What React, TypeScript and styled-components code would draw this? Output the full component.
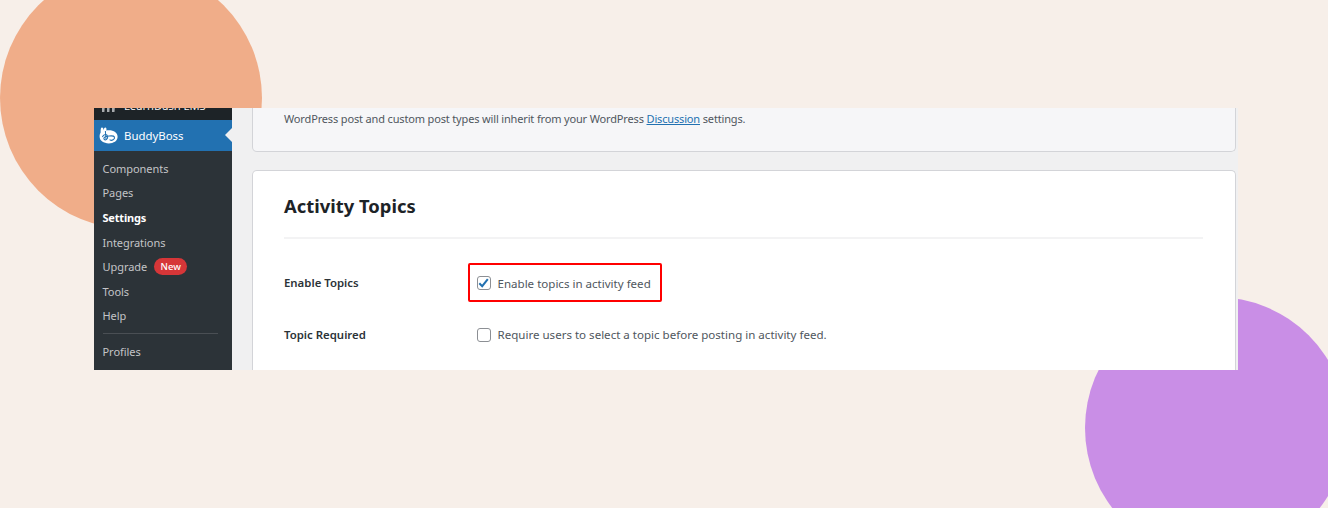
import React from "react";
import styled, { createGlobalStyle } from "styled-components";

const Global = createGlobalStyle`
  html, body { margin: 0; padding: 0; }
  body { background: #f7efe9; font-family: "Noto Sans", "Open Sans", sans-serif; }
`;

const Page = styled.div`
  position: relative;
  width: 1328px;
  height: 508px;
  overflow: hidden;
  background: #f7efe9;
  padding: 108px 90px 0 94px;
  box-sizing: border-box;
`;

const Circle = styled.div<{ $color: string; $x: number; $y: number }>`
  position: absolute;
  left: ${(p) => p.$x - 131}px;
  top: ${(p) => p.$y - 131}px;
  width: 262px;
  height: 262px;
  border-radius: 50%;
  background: ${(p) => p.$color};
`;

const Window = styled.div`
  position: relative;
  display: flex;
  width: 1144px;
  height: 262px;
  overflow: hidden;
  background: #f0f0f1;
`;

const Sidebar = styled.nav`
  width: 138px;
  flex: none;
  background: #2c3338;
  display: flex;
  flex-direction: column;
  overflow: hidden;
`;

const ParentItem = styled.div`
  height: 33px;
  margin-top: -21px;
  flex: none;
  background: #1d2327;
  color: #f0f0f1;
  font-size: 11.2px;
  display: flex;
  align-items: flex-start;
  gap: 7px;
  padding: 11px 0 0 7px;
  box-sizing: border-box;
`;

const ActiveItem = styled.div`
  position: relative;
  height: 31px;
  flex: none;
  background: #2271b1;
  color: #fff;
  font-size: 11.4px;
  display: flex;
  align-items: center;
  gap: 6px;
  padding-left: 5px;
  &::after {
    content: "";
    position: absolute;
    right: 0;
    top: 8px;
    border: 7px solid transparent;
    border-right-color: #f0f0f1;
    border-left-width: 0;
  }
`;

const SubMenu = styled.div`
  display: flex;
  flex-direction: column;
  padding-top: 5px;
`;

const SubItem = styled.div<{ $current?: boolean }>`
  height: 24.6px;
  display: flex;
  align-items: center;
  gap: 7px;
  padding-left: 8.5px;
  font-size: 11px;
  letter-spacing: ${(p) => (p.$current ? "-0.2px" : "-0.05px")};
  font-weight: ${(p) => (p.$current ? 700 : 400)};
  color: ${(p) => (p.$current ? "#ffffff" : "#c3c4c7")};
`;

const Badge = styled.span`
  display: inline-flex;
  align-items: center;
  justify-content: center;
  width: 33px;
  height: 17px;
  border-radius: 9px;
  background: #d63638;
  color: #fff;
  font-size: 9.5px;
  font-weight: 500;
  letter-spacing: 0;
`;

const Separator = styled.div`
  height: 1px;
  margin: 5px 14px 0 9px;
  background: #4a4f54;
`;

const ProfilesItem = styled(SubItem)`
  margin-top: 5px;
`;

const Content = styled.main`
  flex: 1;
  display: flex;
  flex-direction: column;
  gap: 18px;
  padding: 0 2px 0 20px;
  min-width: 0;
`;

const NoticeCard = styled.section`
  height: 44px;
  flex: none;
  box-sizing: border-box;
  background: #f6f6f8;
  border: 1px solid #d3d4d8;
  border-top: none;
  border-radius: 0 0 5px 5px;
  padding: 2px 31px 0;
  font-size: 11px;
  letter-spacing: -0.155px;
  line-height: 17px;
  color: #50575e;
`;

const DocLink = styled.a`
  color: #2271b1;
  text-decoration: underline;
`;

const SettingsCard = styled.section`
  flex: 1;
  background: #fff;
  border: 1px solid #d3d4d8;
  border-bottom: none;
  border-radius: 5px 5px 0 0;
  padding: 0 32px 0 31px;
`;

const Title = styled.h2`
  margin: 0;
  height: 68px;
  box-sizing: border-box;
  padding-top: 20px;
  font-size: 18.4px;
  line-height: 30px;
  font-weight: 700;
  color: #1d2327;
  border-bottom: 2px solid #f3f3f4;
`;

const Field = styled.div<{ $top: number }>`
  display: flex;
  align-items: center;
  margin-top: ${(p) => p.$top}px;
`;

const FieldLabel = styled.div`
  width: 184px;
  flex: none;
  font-size: 11.4px;
  font-weight: 600;
  color: #2c3338;
`;

const Highlight = styled.div<{ $on?: boolean }>`
  display: flex;
  align-items: center;
  gap: 7px;
  width: ${(p) => (p.$on ? "194px" : "auto")};
  height: 39px;
  box-sizing: border-box;
  padding: ${(p) => (p.$on ? "1px" : "0")} 0 0 6.5px;
  border: 2.5px solid ${(p) => (p.$on ? "#ff0000" : "transparent")};
  border-radius: 2px;
  font-size: 11.55px;
  color: #50575e;
`;

const Box = styled.span`
  width: 14px;
  height: 14px;
  flex: none;
  box-sizing: border-box;
  border: 1px solid #8c8f94;
  border-radius: 3px;
  background: #fff;
  display: flex;
  align-items: center;
  justify-content: center;
`;

const BBLogo = () => (
  <svg width="19" height="17" viewBox="0 0 19 17" aria-hidden="true">
    <path d="M1.6 5.4 C1.6 2.4 1.8 .6 3 .6 C4.2 .6 4.4 2 4.6 3.2 C5 1.6 5.4 .4 6.6 .6 C7.6 .8 7.6 2.4 7.4 3.6 C8 3.3 9 3.2 10 3.2 C14.8 3.2 18.6 5.6 18.6 9.8 C18.6 14 14.6 16.4 9.8 16.4 C4.6 16.4 .6 14 .6 9.6 C.6 7.8 1 6.6 1.6 5.4 Z" fill="#fff" />
    <path d="M3.6 9.6 C5 6.8 8 6.8 8.6 9.4 C9.2 12 6.4 13.8 5.2 12.4 C4.2 11.2 5.6 9.4 8.4 9.2 C11 9 14.6 8 15.4 10 C16.2 12.4 12.6 14.2 11 12.8" fill="none" stroke="#2271b1" strokeWidth="1.1" strokeLinecap="round" />
    <path d="M6.4 4.4 L7 12" fill="none" stroke="#2271b1" strokeWidth="1" strokeLinecap="round" />
  </svg>
);

const LDLogo = () => (
  <svg width="16" height="14" viewBox="0 0 16 14" aria-hidden="true">
    <path d="M1 5h3l-.6 9H1zM6 2h3l-.6 12H6zM11 0h3.5l-1 14H11z" fill="#a7aaad" />
  </svg>
);

const Check = () => (
  <svg width="11" height="10" viewBox="0 0 11 10" aria-hidden="true">
    <path d="M1.3 5.2 L4.2 8.2 L9.8 1.2" fill="none" stroke="#2271b1" strokeWidth="2" />
  </svg>
);

export default function App() {
  return (
    <Page>
      <Global />
      <Circle $color="#f0ad89" $x={131} $y={98} />
      <Circle $color="#c98ee6" $x={1216} $y={428} />
      <Window>
        <Sidebar>
          <ParentItem>
            <LDLogo />
            <span>LearnDash LMS</span>
          </ParentItem>
          <ActiveItem>
            <BBLogo />
            <span>BuddyBoss</span>
          </ActiveItem>
          <SubMenu>
            <SubItem>Components</SubItem>
            <SubItem>Pages</SubItem>
            <SubItem $current>Settings</SubItem>
            <SubItem>Integrations</SubItem>
            <SubItem>
              Upgrade <Badge>New</Badge>
            </SubItem>
            <SubItem>Tools</SubItem>
            <SubItem>Help</SubItem>
            <Separator />
            <ProfilesItem>Profiles</ProfilesItem>
          </SubMenu>
        </Sidebar>
        <Content>
          <NoticeCard>
            WordPress post and custom post types will inherit from your WordPress{" "}
            <DocLink href="#">Discussion</DocLink> settings.
          </NoticeCard>
          <SettingsCard>
            <Title>Activity Topics</Title>
            <Field $top={24}>
              <FieldLabel>Enable Topics</FieldLabel>
              <Highlight $on>
                <Box>
                  <Check />
                </Box>
                Enable topics in activity feed
              </Highlight>
            </Field>
            <Field $top={13}>
              <FieldLabel>Topic Required</FieldLabel>
              <Highlight>
                <Box />
                Require users to select a topic before posting in activity feed.
              </Highlight>
            </Field>
          </SettingsCard>
        </Content>
      </Window>
    </Page>
  );
}
